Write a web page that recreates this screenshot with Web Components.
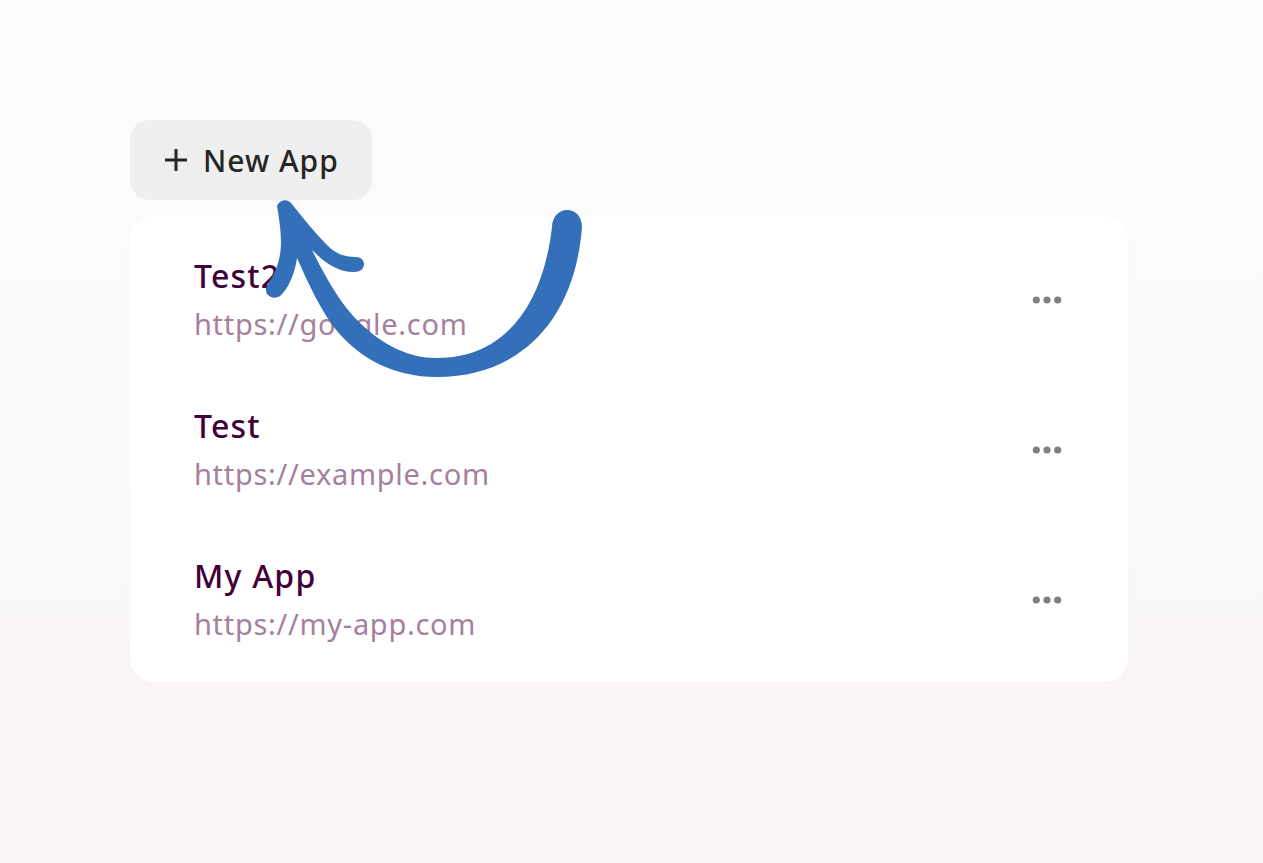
<!DOCTYPE html>
<html>
<head>
<meta charset="utf-8">
<title>Apps</title>
<style>
  html, body { margin: 0; height: 100%; }
  body {
    background: linear-gradient(180deg, #fdfcfc 0%, #fbfafb 40%, #faf9fa 58%, #faf6f7 76%, #faf6f7 100%);
    font-family: "Noto Sans", sans-serif;
    overflow: hidden;
  }
</style>
</head>
<body>
<apps-page>
  <new-app-button>New App</new-app-button>
  <apps-list>
    <app-row name="Test2" url="https://google.com"></app-row>
    <app-row name="Test" url="https://example.com"></app-row>
    <app-row name="My App" url="https://my-app.com"></app-row>
  </apps-list>
  <scribble-arrow></scribble-arrow>
</apps-page>

<script>
class AppsPage extends HTMLElement {
    constructor() {
        super();
        this.attachShadow({ mode: "open" });
        this.shadowRoot.innerHTML = `
            <style>
                :host {
                    display: flex;
                    flex-direction: column;
                    align-items: flex-start;
                    gap: 16px;
                    position: relative;
                    box-sizing: border-box;
                    width: 1263px;
                    height: 863px;
                    padding: 120px 135px 0 130px;
                }
            </style>
            <slot></slot>
        `;
    }
}

class NewAppButton extends HTMLElement {
    constructor() {
        super();
        this.attachShadow({ mode: "open" });
        this.shadowRoot.innerHTML = `
            <style>
                :host {
                    display: flex;
                    align-items: center;
                    gap: 15px;
                    box-sizing: border-box;
                    width: 242px;
                    height: 80px;
                    padding-left: 34px;
                    border-radius: 20px;
                    background: #efefef;
                    color: #262626;
                    font-size: 30px;
                    letter-spacing: 1px;
                    font-weight: 500;
                }
                svg { display: block; flex: none; }
            </style>
            <svg width="24" height="24" viewBox="0 0 24 24" fill="none" stroke="#262626" stroke-width="3">
                <path d="M12 1v22M1 12h22"/>
            </svg>
            <span><slot></slot></span>
        `;
    }
}

class AppsList extends HTMLElement {
    constructor() {
        super();
        this.attachShadow({ mode: "open" });
        this.shadowRoot.innerHTML = `
            <style>
                :host {
                    display: flex;
                    flex-direction: column;
                    align-self: stretch;
                    box-sizing: border-box;
                    padding: 9px 0 7px;
                    border-radius: 24px;
                    background: #fff;
                    box-shadow: 0 4px 20px rgba(60, 30, 60, 0.012);
                }
            </style>
            <slot></slot>
        `;
    }
}

class AppRow extends HTMLElement {
    constructor() {
        super();
        this.attachShadow({ mode: "open" });
    }
    static get observedAttributes() {
        return ["name", "url"];
    }
    connectedCallback() {
        this.shadowRoot.innerHTML = `
            <style>
                :host {
                    display: flex;
                    align-items: center;
                    justify-content: space-between;
                    box-sizing: border-box;
                    height: 150px;
                    padding: 0 66px 0 64px;
                }
                .name {
                    color: #42003a;
                    font-size: 32px;
                    line-height: 48px;
                    letter-spacing: 1.2px;
                    font-weight: 500;
                }
                .url {
                    color: #a5809e;
                    font-size: 29px;
                    line-height: 48px;
                    letter-spacing: 0.7px;
                }
                svg { display: block; }
            </style>
            <div>
                <div class="name">${this.getAttribute("name")}</div>
                <div class="url">${this.getAttribute("url")}</div>
            </div>
            <svg width="30" height="8" viewBox="0 0 30 8" fill="#808080">
                <circle cx="4.3" cy="4" r="3.6"/>
                <circle cx="15" cy="4" r="3.6"/>
                <circle cx="25.7" cy="4" r="3.6"/>
            </svg>
        `;
    }
}

class ScribbleArrow extends HTMLElement {
    constructor() {
        super();
        this.attachShadow({ mode: "open" });
        this.shadowRoot.innerHTML = `
            <style>
                :host {
                    position: absolute;
                    left: 260px;
                    top: 195px;
                    width: 330px;
                    height: 190px;
                    pointer-events: none;
                }
                svg { display: block; }
            </style>
            <svg width="330" height="190" viewBox="260 195 330 190">
                <path fill="#3470b9" d="M277 206
                    C279 200 287 198 291 203
                    C303 218 314 232 327 245
                    C335 253 343 257 356 257
                    C362 257 364 261 364 264
                    C364 269 360 272 354 272
                    C339 272 327 265 312 250
                    C326 278 341 305 360 323
                    C383 345 408 358 437 358
                    C505 358 543 305 552 227
                    C552 217 559 210 567 210
                    C576 210 582 217 582 227
                    C575 320 520 377 437 377
                    C393 377 360 358 337 331
                    C322 313 308 283 297 258
                    C295 272 290 285 283 293
                    C279 299 271 299 267 294
                    C265 290 266 287 268 284
                    C276 272 281 258 281 243
                    C281 230 279 218 277 206 Z"/>
            </svg>
        `;
    }
}

customElements.define("apps-page", AppsPage);
customElements.define("new-app-button", NewAppButton);
customElements.define("apps-list", AppsList);
customElements.define("app-row", AppRow);
customElements.define("scribble-arrow", ScribbleArrow);
</script>
</body>
</html>
